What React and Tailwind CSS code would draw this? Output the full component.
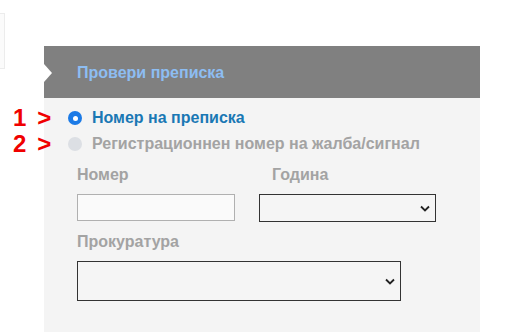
import React from 'react';

const Chevron = () => (
  <svg width="10" height="7" viewBox="0 0 10 7" className="shrink-0">
    <path d="M1 1.5 L5 5.5 L9 1.5" fill="none" stroke="#222" strokeWidth="1.8" />
  </svg>
);

const Radio = ({ checked, label, mark }) => (
  <div className="relative flex items-center h-[20px]">
    {/* red annotation on the left */}
    <span className="absolute left-[-55px] top-[-4px] flex items-center gap-[11px] text-[#f00000] font-bold text-[24px] leading-[28px]">
      <span>{mark}</span>
      <span>&gt;</span>
    </span>
    {checked ? (
      <span className="w-[14px] h-[14px] rounded-full bg-[#1b7ae6] flex items-center justify-center">
        <span className="w-[5px] h-[5px] rounded-full bg-white" />
      </span>
    ) : (
      <span className="w-[14px] h-[14px] rounded-full bg-[#dcdfe4]" />
    )}
    <span
      className={`ml-[10px] text-[16px] font-bold ${
        checked ? 'text-[#1a78b4]' : 'text-[#a3a3a3]'
      }`}
    >
      {label}
    </span>
  </div>
);

const App = () => {
  return (
    <div
      className="w-[518px] h-[332px] bg-white overflow-hidden flex items-start"
      style={{ fontFamily: '"Liberation Sans", Arial, sans-serif' }}
    >
      {/* faint box on the far left */}
      <div className="mt-[13px] w-[5px] h-[56px] bg-[#fbfbfb] border border-l-0 border-[#ececec]" />

      <div className="ml-[39px] mt-[46px] w-[436px] h-[286px] bg-[#f4f4f4] flex flex-col">
        {/* header */}
        <div className="relative h-[52px] bg-[#808080] flex items-center pl-[33px]">
          <span className="absolute left-0 top-[18px] w-0 h-0 border-y-[9px] border-y-transparent border-l-[8px] border-l-white" />
          <span className="text-[16px] font-bold text-[#8dbdf2] mt-[2px]">Провери преписка</span>
        </div>

        {/* body */}
        <div className="flex flex-col pt-[10px] pl-[24px]">
          <Radio checked mark="1" label="Номер на преписка" />
          <div className="mt-[6px]">
            <Radio mark="2" label="Регистрационнен номер на жалба/сигнал" />
          </div>

          <div className="flex mt-[11px] pl-[9px]">
            <div className="flex flex-col w-[182px]">
              <span className="text-[16px] leading-[19px] font-bold text-[#a3a3a3]">Номер</span>
              <div className="mt-[10px] w-[158px] h-[27px] bg-[#fafafa] border border-[#b0b0b0]" />
            </div>
            <div className="flex flex-col">
              <span className="ml-[13px] text-[16px] leading-[19px] font-bold text-[#a3a3a3]">Година</span>
              <div className="mt-[10px] w-[177px] h-[28px] bg-[#f5f5f5] border border-[#333] flex items-center justify-end pr-[5px]">
                <Chevron />
              </div>
            </div>
          </div>

          <div className="flex flex-col mt-[10px] pl-[9px]">
            <span className="text-[16px] leading-[19px] font-bold text-[#a3a3a3]">Прокуратура</span>
            <div className="mt-[10px] w-[324px] h-[40px] bg-[#f5f5f5] border border-[#333] flex items-center justify-end pr-[5px]">
              <Chevron />
            </div>
          </div>
        </div>
      </div>
    </div>
  );
};

export default App;
